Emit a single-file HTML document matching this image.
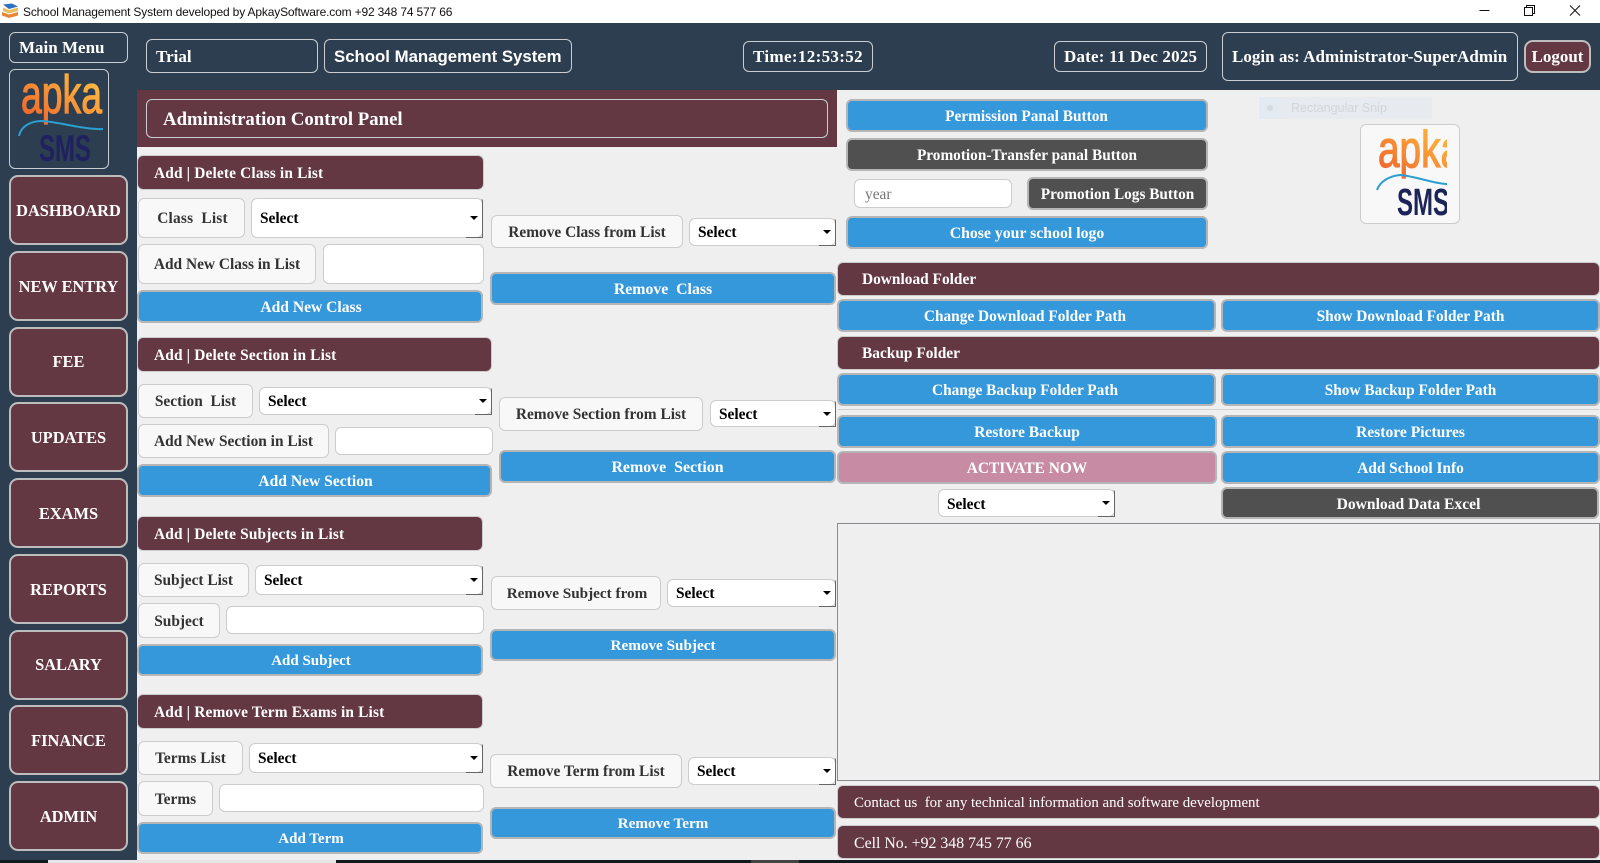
<!DOCTYPE html>
<html><head><meta charset="utf-8"><title>School Management System</title>
<style>
*{box-sizing:border-box;margin:0;padding:0}
html,body{width:1600px;height:863px;overflow:hidden;background:#efefef}
body{position:relative;font-family:"Liberation Serif",serif;font-weight:bold}
.a,.o,.m,.k,.bt,.g,.p,.l,.s,.i{position:absolute;display:flex;align-items:center;white-space:nowrap}
.o{border:1px solid #c8ced4;border-radius:6px;color:#fff;font-size:17px;padding-left:9px}
.m{background:#633843;border:2px solid #bdbdbd;border-radius:9px;color:#fff;font-size:16.4px;justify-content:center;left:9px;width:119px;height:70px;padding-top:2px}
.k{background:#633843;border:1px solid #ccc;border-radius:6px;color:#fff;font-size:15.4px;padding-left:16px;padding-top:2px;letter-spacing:.15px}
.bt{background:#3498db;border:2px solid #b5b5b5;border-radius:6px;color:#fff;font-size:15.6px;justify-content:center;padding-top:2px}
.lc{padding-left:2px}
.r{font-size:15.35px}
.g{background:#505050;border:2px solid #b5b5b5;border-radius:6px;color:#fff;font-size:15.3px;justify-content:center;padding-top:2px}
.p{background:#c78ca4;border:2px solid #b5b5b5;border-radius:6px;color:#fff;font-size:15.6px;justify-content:center;padding-top:2px}
.l{background:#f8f8f8;border:1px solid #ccc;border-radius:6px;color:#333;font-size:15.4px;justify-content:center;padding-top:2px}
.s{background:#fff;border:1px solid #ccc;border-radius:6px;color:#000;font-size:15.4px;padding-left:8px;padding-top:2px}
.s:before{content:"";position:absolute;right:4px;top:50%;margin-top:-2px;border-left:4px solid transparent;border-right:4px solid transparent;border-top:4px solid #000}
.s:after{content:"";position:absolute;right:-1px;bottom:-1px;width:16px;height:100%;border-right:1px solid #666;border-bottom:1px solid #666;border-top-right-radius:2px;pointer-events:none;clip-path:polygon(0 calc(100% - 2px),14px calc(100% - 2px),14px 0,100% 0,100% 100%,0 100%)}
.i{background:#fff;border:1px solid #ccc;border-radius:6px}
</style></head><body>

<!-- title bar -->
<div class="a" style="left:0;top:0;width:1600px;height:23px;background:#fff"></div>
<svg class="a" style="left:2px;top:3px" width="17" height="16" viewBox="0 0 17 16"><path d="M1 1.500 L10 0.500 L16 3.500 L7 6Z" fill="#2f6fc0"/><path d="M1 4.500 L7 7 L16 4.500 L16 8 L7 10.500 L1 8Z" fill="#e8c060"/><path d="M0 9 L7 11.500 L16 9 L16 12.500 L7 15 L0 12.500Z" fill="#e8873a"/></svg>
<div class="a" style="left:23px;top:3px;height:17px;font:12px 'Liberation Sans',sans-serif;color:#111;letter-spacing:-.165px">School Management System developed by ApkaySoftware.com +92 348 74 577 66</div>
<svg class="a" style="left:1470px;top:0" width="130" height="23" viewBox="0 0 130 23" fill="none" stroke="#111" stroke-width="1"><path d="M9.500 10.500H19.500"/><path d="M54.500 7.500h8v8h-8z"/><path d="M56.500 7.500V5.500h8v8h-2"/><path d="M100 5.500 L110 15.500M110 5.500 L100 15.500"/></svg>

<!-- dark chrome -->
<div class="a" style="left:0;top:23px;width:1600px;height:67px;background:#2c3e50"></div>
<div class="a" style="left:0;top:90px;width:137px;height:770px;background:#2c3e50"></div>
<div class="a" style="left:0;top:860px;width:1600px;height:3px;background:#101a20"></div>
<div class="a" style="left:48px;top:860px;width:288px;height:3px;background:#e6e6e6"></div>
<div class="a" style="left:751px;top:860px;width:48px;height:3px;background:#444"></div>

<div class="o" style="left:9px;top:32px;width:119px;height:31px">Main Menu</div>
<div class="o" style="left:146px;top:39px;width:172px;height:34px;padding-top:2px">Trial</div>
<div class="o" style="left:324px;top:39px;width:248px;height:34px;font:bold 16.8px 'Liberation Sans',sans-serif;padding-top:2px">School Management System</div>
<div class="o" style="left:743px;top:41px;width:130px;height:31px;letter-spacing:.35px">Time:12:53:52</div>
<div class="o" style="left:1054px;top:41px;width:153px;height:31px;letter-spacing:.2px">Date: 11 Dec 2025</div>
<div class="o" style="left:1222px;top:32px;width:296px;height:49px;letter-spacing:.03px">Login as: Administrator-SuperAdmin</div>
<div class="a" style="left:1524px;top:40px;width:67px;height:33px;background:#633843;border:2px solid #bdbdbd;border-radius:9px;color:#fff;font-size:17px;justify-content:center">Logout</div>

<!-- sidebar logo -->
<div class="o" style="left:9px;top:69px;width:100px;height:100px;padding:0"></div>
<svg class="a" style="left:0;top:60px" width="137" height="115" viewBox="0 60 137 115">
<defs><linearGradient id="g1" x1="0" y1="1" x2="1" y2="0"><stop offset="0" stop-color="#ee5a2a"/><stop offset=".6" stop-color="#f9a33a"/><stop offset="1" stop-color="#fbcb45"/></linearGradient></defs>
<text x="21" y="113" font-family="Liberation Sans" font-weight="normal" font-size="54" textLength="81" lengthAdjust="spacingAndGlyphs" fill="url(#g1)" stroke="url(#g1)" stroke-width="1.2">apka</text>
<path d="M19 136C21 126 31 121 42 121C60 122 85 130 103 129" fill="none" stroke="#2a9fd0" stroke-width="2"/>
<text x="39" y="161" font-family="Liberation Sans" font-weight="bold" font-size="37" textLength="52" lengthAdjust="spacingAndGlyphs" fill="#1f2161">SMS</text>
</svg>

<div class="m" style="top:175px">DASHBOARD</div>
<div class="m" style="top:251px">NEW ENTRY</div>
<div class="m" style="top:327px;padding-top:0">FEE</div>
<div class="m" style="top:402px">UPDATES</div>
<div class="m" style="top:478px">EXAMS</div>
<div class="m" style="top:554px">REPORTS</div>
<div class="m" style="top:630px;padding-top:0">SALARY</div>
<div class="m" style="top:705px">FINANCE</div>
<div class="m" style="top:781px">ADMIN</div>

<!-- panel header -->
<div class="a" style="left:137px;top:90px;width:700px;height:57px;background:#633843"></div>
<div class="o" style="left:146px;top:99px;width:682px;height:39px;font-size:18.8px;padding-left:16px;padding-top:3px">Administration Control Panel</div>

<!-- class -->
<div class="k" style="left:137px;top:155px;width:347px;height:35px">Add | Delete Class in List</div>
<div class="l" style="left:138px;top:198px;width:107px;height:40px;letter-spacing:.2px;padding-left:2px">Class&nbsp; List</div>
<div class="s" style="left:251px;top:198px;width:232px;height:40px">Select</div>
<div class="l" style="left:138px;top:244px;width:178px;height:40px">Add New Class in List</div>
<div class="i" style="left:323px;top:244px;width:161px;height:40px"></div>
<div class="bt lc" style="left:137px;top:290px;width:346px;height:33px">Add New Class</div>
<div class="l" style="left:491px;top:215px;width:192px;height:33px">Remove Class from List</div>
<div class="s" style="left:689px;top:218px;width:147px;height:28px">Select</div>
<div class="bt" style="left:490px;top:272px;width:346px;height:33px;font-size:15.8px">Remove&nbsp; Class</div>

<!-- section -->
<div class="k" style="left:137px;top:337px;width:355px;height:35px">Add | Delete Section in List</div>
<div class="l" style="left:138px;top:384px;width:115px;height:34px">Section&nbsp; List</div>
<div class="s" style="left:259px;top:387px;width:233px;height:28px">Select</div>
<div class="l" style="left:138px;top:424px;width:191px;height:34px">Add New Section in List</div>
<div class="i" style="left:335px;top:427px;width:158px;height:28px"></div>
<div class="bt lc" style="left:137px;top:464px;width:355px;height:33px">Add New Section</div>
<div class="l" style="left:499px;top:397px;width:204px;height:34px">Remove Section from List</div>
<div class="s" style="left:710px;top:400px;width:126px;height:27px">Select</div>
<div class="bt" style="left:499px;top:450px;width:337px;height:33px;font-size:15.9px">Remove&nbsp; Section</div>

<!-- subject -->
<div class="k" style="left:137px;top:516px;width:346px;height:35px">Add | Delete Subjects in List</div>
<div class="l" style="left:138px;top:563px;width:111px;height:34px">Subject List</div>
<div class="s" style="left:255px;top:565px;width:228px;height:30px">Select</div>
<div class="l" style="left:138px;top:603px;width:82px;height:35px">Subject</div>
<div class="i" style="left:226px;top:606px;width:258px;height:28px"></div>
<div class="bt lc" style="left:137px;top:644px;width:346px;height:32px;font-size:15px">Add Subject</div>
<div class="l" style="left:491px;top:576px;width:170px;height:34px;font-size:15.2px;padding-left:2px">Remove Subject from</div>
<div class="s" style="left:667px;top:579px;width:169px;height:28px">Select</div>
<div class="bt" style="left:490px;top:629px;width:346px;height:32px;font-size:15.2px">Remove Subject</div>

<!-- term -->
<div class="k" style="left:137px;top:694px;width:346px;height:35px">Add | Remove Term Exams in List</div>
<div class="l" style="left:138px;top:741px;width:105px;height:34px">Terms List</div>
<div class="s" style="left:249px;top:743px;width:234px;height:30px">Select</div>
<div class="l" style="left:138px;top:781px;width:75px;height:35px">Terms</div>
<div class="i" style="left:219px;top:784px;width:265px;height:28px"></div>
<div class="bt lc" style="left:137px;top:822px;width:346px;height:32px;font-size:15px">Add Term</div>
<div class="l" style="left:490px;top:754px;width:192px;height:34px">Remove Term from List</div>
<div class="s" style="left:688px;top:757px;width:148px;height:28px">Select</div>
<div class="bt" style="left:490px;top:807px;width:346px;height:32px;font-size:15.2px">Remove Term</div>

<!-- right top -->
<div class="bt r" style="left:846px;top:99px;width:362px;height:33px;padding-right:1px">Permission Panal Button</div>
<div class="g" style="left:846px;top:138px;width:362px;height:33px">Promotion-Transfer panal Button</div>
<div class="i" style="left:854px;top:179px;width:158px;height:29px;color:#777;font-size:15.4px;font-weight:normal;padding-left:10px;padding-top:2px">year</div>
<div class="g" style="left:1027px;top:177px;width:181px;height:33px">Promotion Logs Button</div>
<div class="bt" style="left:846px;top:216px;width:362px;height:33px;font-size:15.8px">Chose your school logo</div>

<div class="a" style="left:1259px;top:97px;width:173px;height:22px;background:#e7ebef;font:normal 12.500px 'Liberation Sans',sans-serif;color:#d2d6da;padding-left:32px">Rectangular Snip</div>
<div class="a" style="left:1259px;top:97px;width:22px;height:22px;background:#e3eaf2;justify-content:center"><span style="width:6px;height:6px;border-radius:50%;background:#d6dbe0"></span></div>

<div class="a" style="left:1360px;top:124px;width:100px;height:100px;background:#f8f8f8;border:1px solid #ccc;border-radius:6px"></div>
<svg class="a" style="left:1370px;top:125px" width="77" height="98" viewBox="1370 125 77 98">
<defs><linearGradient id="g2" x1="0" y1="1" x2="1" y2="0"><stop offset="0" stop-color="#ee5a2a"/><stop offset=".6" stop-color="#f9a33a"/><stop offset="1" stop-color="#fbcb45"/></linearGradient></defs>
<text x="1378" y="167" font-family="Liberation Sans" font-weight="normal" font-size="52" textLength="84" lengthAdjust="spacingAndGlyphs" fill="url(#g2)" stroke="url(#g2)" stroke-width="1.2">apka</text>
<path d="M1377 190C1380 181 1390 176 1400 175C1415 176 1435 184 1447 184" fill="none" stroke="#2a9fd0" stroke-width="2"/>
<text x="1397" y="215" font-family="Liberation Sans" font-weight="bold" font-size="38" textLength="52" lengthAdjust="spacingAndGlyphs" fill="#1b2358">SMS</text>
</svg>

<!-- right middle -->
<div class="k" style="left:837px;top:262px;width:763px;height:34px;padding-left:24px;letter-spacing:0">Download Folder</div>
<div class="bt r" style="left:837px;top:299px;width:379px;height:33px;padding-right:3px">Change Download Folder Path</div>
<div class="bt r" style="left:1221px;top:299px;width:379px;height:33px">Show Download Folder Path</div>
<div class="k" style="left:837px;top:336px;width:763px;height:34px;padding-left:24px;letter-spacing:0">Backup Folder</div>
<div class="bt r" style="left:837px;top:373px;width:379px;height:33px;padding-right:3px">Change Backup Folder Path</div>
<div class="bt r" style="left:1221px;top:373px;width:379px;height:33px">Show Backup Folder Path</div>
<div class="a" style="left:838px;top:409px;width:761px;height:1px;background:#d0d0d0"></div>
<div class="bt" style="left:837px;top:415px;width:380px;height:33px">Restore Backup</div>
<div class="bt" style="left:1221px;top:415px;width:379px;height:33px">Restore Pictures</div>
<div class="p" style="left:837px;top:451px;width:380px;height:33px;font-size:15.4px">ACTIVATE NOW</div>
<div class="bt r" style="left:1221px;top:451px;width:379px;height:33px">Add School Info</div>
<div class="s" style="left:938px;top:489px;width:177px;height:28px;padding-top:4px">Select</div>
<div class="g" style="left:1221px;top:487px;width:378px;height:32px;padding-top:4px;padding-right:3px;font-size:15.6px">Download Data Excel</div>

<div class="a" style="left:837px;top:523px;width:763px;height:258px;border:1px solid #8a8a90;background:#efefef"></div>

<div class="k" style="left:837px;top:785px;width:763px;height:34px;font-weight:normal;font-size:14.9px;letter-spacing:0">Contact us&nbsp; for any technical information and software development</div>
<div class="k" style="left:837px;top:825px;width:763px;height:34px;font-weight:normal;font-size:15.85px;letter-spacing:0;padding-top:3px">Cell No. +92 348 745 77 66</div>
</body></html>
